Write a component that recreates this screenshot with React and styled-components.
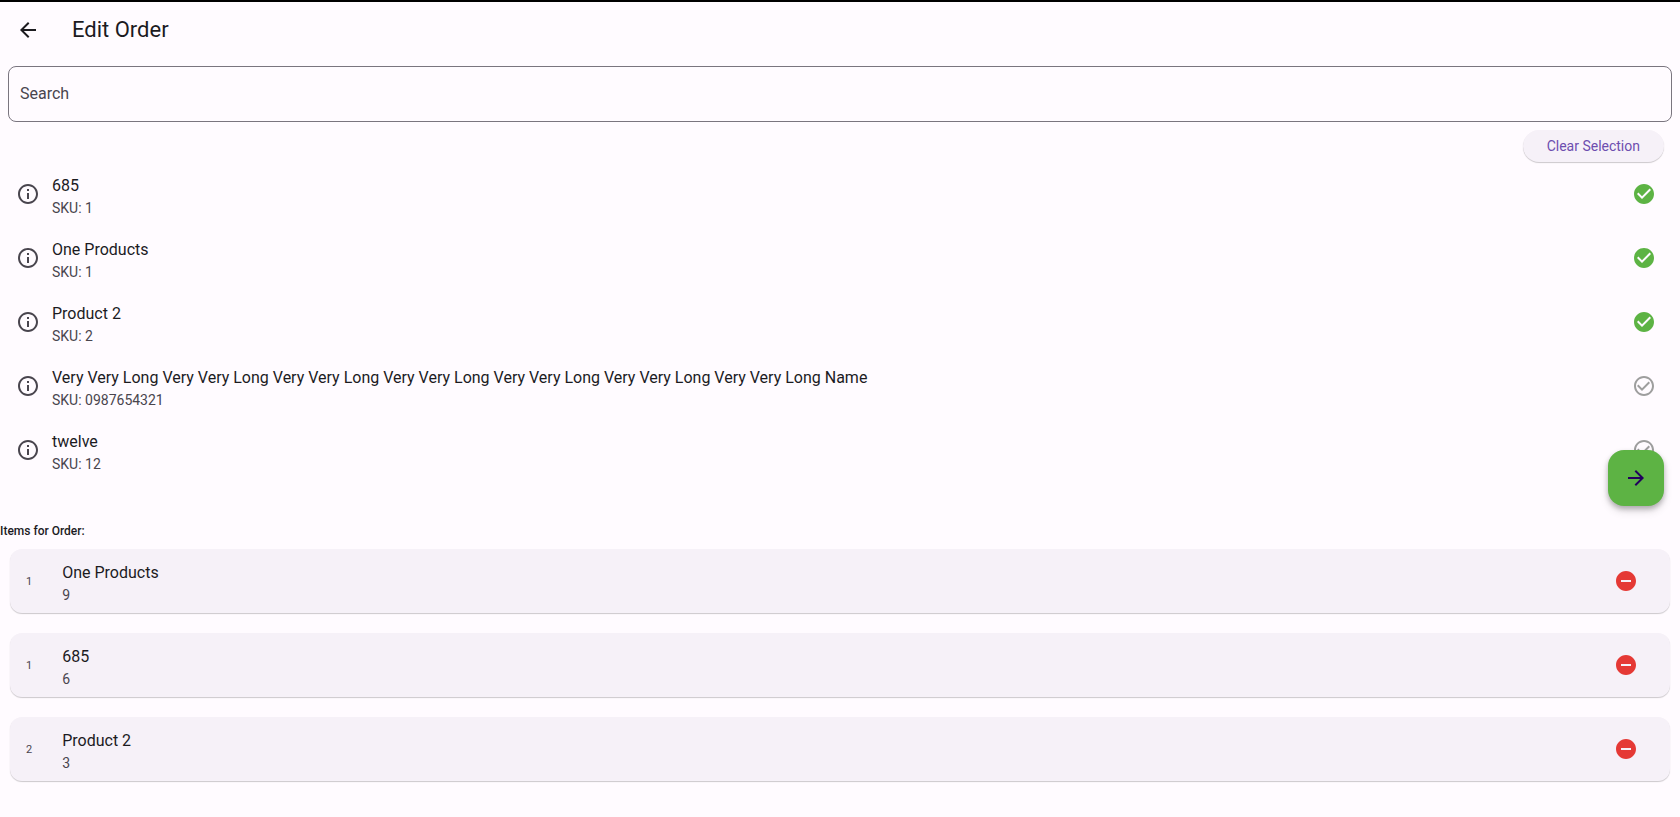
import { useState } from "react";
import styled, { createGlobalStyle } from "styled-components";
import {
  MdArrowBack,
  MdArrowForward,
  MdCheckCircle,
  MdCheckCircleOutline,
  MdInfoOutline,
  MdRemoveCircle,
} from "react-icons/md";

const GlobalStyle = createGlobalStyle`
  * {
    box-sizing: border-box;
  }

  body {
    margin: 0;
    background: #fffbff;
    color: #1c1b1f;
    font-family: Roboto, "Liberation Sans", sans-serif;
    font-size: 16px;
    line-height: 24px;
  }

  button,
  input {
    font: inherit;
    color: inherit;
  }
`;

const Page = styled.main`
  display: flex;
  flex-direction: column;
  border-top: 2px solid #000;
`;

const AppBar = styled.header`
  display: flex;
  align-items: center;
  gap: 32px;
  height: 56px;
  padding: 0 16px;
`;

const PageTitle = styled.h1`
  margin: 0;
  font-size: 22px;
  font-weight: 400;
  line-height: 28px;
`;

const IconButton = styled.button`
  display: flex;
  flex: none;
  padding: 0;
  border: 0;
  background: none;
  color: ${({ $color }) => $color};
  cursor: pointer;

  svg {
    width: 24px;
    height: 24px;
  }
`;

const SearchField = styled.div`
  display: flex;
  padding: 8px;
`;

const SearchInput = styled.input`
  flex: 1;
  min-width: 0;
  height: 56px;
  padding: 0 11px 2px;
  border: 1px solid #7a757f;
  border-radius: 8px;
  background: transparent;
  outline-color: #6750a4;

  &::placeholder {
    color: #49454e;
    opacity: 1;
  }
`;

const Toolbar = styled.div`
  display: flex;
  justify-content: flex-end;
  padding: 0 16px;
`;

const ClearButton = styled.button`
  height: 32px;
  padding: 0 24px;
  border: 0;
  border-radius: 16px;
  background: #f6f1f8;
  box-shadow: 0 1px 1px rgba(0, 0, 0, 0.2);
  color: #6d4eaf;
  font-size: 14px;
  line-height: 20px;
  cursor: pointer;
`;

const Products = styled.section`
  position: relative;
  padding-bottom: 40px;
`;

const List = styled.ul`
  display: flex;
  flex-direction: column;
  gap: ${({ $gap }) => $gap || "0"};
  margin: 0;
  padding: ${({ $padding }) => $padding || "0"};
  list-style: none;
`;

const ProductRow = styled.li`
  display: flex;
  align-items: center;
  gap: 12px;
  height: 64px;
  padding: 0 24px 0 16px;
`;

const ItemText = styled.div`
  display: flex;
  flex: 1;
  flex-direction: column;
  min-width: 0;
  padding-top: 4px;
`;

const ItemName = styled.span`
  color: #1c1b1f;
`;

const ItemDetail = styled.span`
  color: #49454e;
  font-size: 14px;
  line-height: 20px;
`;

const CheckLabel = styled.label`
  display: flex;
  border-radius: 50%;
  color: ${({ $checked }) => ($checked ? "#5db344" : "#9e9e9e")};
  cursor: pointer;

  svg {
    width: 24px;
    height: 24px;
  }

  &:focus-within {
    outline: 2px solid #6750a4;
  }
`;

const HiddenCheckbox = styled.input`
  position: absolute;
  width: 1px;
  height: 1px;
  margin: 0;
  opacity: 0;
`;

// floats over the end of the product list
const NextButton = styled.button`
  position: absolute;
  right: 16px;
  bottom: 16px;
  display: flex;
  align-items: center;
  justify-content: center;
  width: 56px;
  height: 56px;
  padding: 0;
  border: 0;
  border-radius: 16px;
  background: #5db344;
  box-shadow: 0 3px 5px rgba(0, 0, 0, 0.24), 0 5px 10px rgba(0, 0, 0, 0.12);
  color: #22005d;
  cursor: pointer;
`;

const OrderTitle = styled.h2`
  margin: 0;
  padding: 1px 0 10px;
  font-size: 12px;
  font-weight: 500;
  line-height: 16px;
`;

const OrderCard = styled.li`
  display: flex;
  align-items: center;
  gap: 30px;
  height: 64px;
  padding: 0 32px 0 16px;
  border-radius: 12px;
  background: #f6f1f8;
  box-shadow: 0 1px 1px rgba(0, 0, 0, 0.2);
`;

const Sku = styled.span`
  padding-top: 2px;
  color: #49454e;
  font-size: 11px;
  line-height: 16px;
`;

const products = [
  { id: 1, name: "685", sku: "1" },
  { id: 2, name: "One Products", sku: "1" },
  { id: 3, name: "Product 2", sku: "2" },
  {
    id: 4,
    name: "Very Very Long Very Very Long Very Very Long Very Very Long Very Very Long Very Very Long Very Very Long Name",
    sku: "0987654321",
  },
  { id: 5, name: "twelve", sku: "12" },
];

const initialOrder = [
  { id: 2, quantity: 9 },
  { id: 1, quantity: 6 },
  { id: 3, quantity: 3 },
];

const ProductItem = ({ product, checked, onToggle }) => {
  return (
    <ProductRow>
      <IconButton type="button" $color="#49454e" aria-label="Product info">
        <MdInfoOutline />
      </IconButton>
      <ItemText>
        <ItemName>{product.name}</ItemName>
        <ItemDetail>SKU: {product.sku}</ItemDetail>
      </ItemText>
      <CheckLabel $checked={checked}>
        <HiddenCheckbox
          type="checkbox"
          aria-label={product.name}
          checked={checked}
          onChange={onToggle}
        />
        {checked ? <MdCheckCircle /> : <MdCheckCircleOutline />}
      </CheckLabel>
    </ProductRow>
  );
};

const OrderItem = ({ product, quantity, onRemove }) => {
  return (
    <OrderCard>
      <Sku>{product.sku}</Sku>
      <ItemText>
        <ItemName>{product.name}</ItemName>
        <ItemDetail>{quantity}</ItemDetail>
      </ItemText>
      <IconButton
        type="button"
        $color="#e53935"
        aria-label={`Remove ${product.name}`}
        onClick={onRemove}
      >
        <MdRemoveCircle />
      </IconButton>
    </OrderCard>
  );
};

const App = () => {
  const [search, setSearch] = useState("");
  const [order, setOrder] = useState(initialOrder);

  const visible = products.filter((product) =>
    product.name.toLowerCase().includes(search.toLowerCase())
  );

  const removeItem = (id) => {
    setOrder(order.filter((item) => item.id !== id));
  };

  const toggleItem = (id) => {
    if (order.some((item) => item.id === id)) {
      removeItem(id);
    } else {
      setOrder([...order, { id, quantity: 1 }]);
    }
  };

  return (
    <Page>
      <GlobalStyle />
      <AppBar>
        <IconButton type="button" $color="#1c1b1f" aria-label="Back">
          <MdArrowBack />
        </IconButton>
        <PageTitle>Edit Order</PageTitle>
      </AppBar>
      <SearchField>
        <SearchInput
          type="text"
          aria-label="Search"
          placeholder="Search"
          value={search}
          onChange={(e) => setSearch(e.target.value)}
        />
      </SearchField>
      <Toolbar>
        <ClearButton type="button" onClick={() => setOrder([])}>
          Clear Selection
        </ClearButton>
      </Toolbar>
      <Products>
        <List>
          {visible.map((product) => (
            <ProductItem
              key={product.id}
              product={product}
              checked={order.some((item) => item.id === product.id)}
              onToggle={() => toggleItem(product.id)}
            />
          ))}
        </List>
        <NextButton type="button" aria-label="Next">
          <MdArrowForward size={24} />
        </NextButton>
      </Products>
      <section>
        <OrderTitle>Items for Order:</OrderTitle>
        <List $gap="20px" $padding="0 10px 36px">
          {order.map((item) => (
            <OrderItem
              key={item.id}
              product={products.find((product) => product.id === item.id)}
              quantity={item.quantity}
              onRemove={() => removeItem(item.id)}
            />
          ))}
        </List>
      </section>
    </Page>
  );
};

export default App;
